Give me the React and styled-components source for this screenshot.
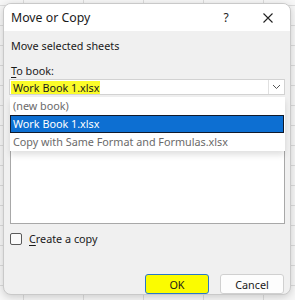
import React from "react";
import styled, { createGlobalStyle } from "styled-components";

const Global = createGlobalStyle`
  html, body { margin: 0; padding: 0; }
  body {
    width: 295px; height: 300px; overflow: hidden;
    background-color: #f7f7f7;
    background-image:
      linear-gradient(to right, #dcdcdc 1px, transparent 1px),
      linear-gradient(to bottom, #dcdcdc 1px, transparent 1px);
    background-size: 60px 100%, 100% 20px;
    background-position: 23px 0, 0 5px;
    font-family: "Noto Sans", "Open Sans", sans-serif;
  }
`;

const Desk = styled.div`
  padding: 3px 0 0 3px;
`;

const Dialog = styled.div`
  width: 288px;
  height: 292px;
  box-sizing: border-box;
  border: 1px solid #c9c9c9;
  border-radius: 8px;
  background: #f0f0f0;
  box-shadow: 0 2px 8px rgba(0,0,0,0.18);
  overflow: hidden;
  display: flex;
  flex-direction: column;
`;

const TitleBar = styled.div`
  height: 27px;
  background: #ffffff;
  display: flex;
  align-items: center;
  padding-left: 7px;
  padding-right: 5px;
  color: #1a1a1a;
  font-size: 12.3px;
`;

const Title = styled.div`
  flex: 1;
`;

const TitleBtn = styled.div`
  width: ${p => p.$w}px;
  display: flex;
  justify-content: center;
  align-items: center;
  font-size: 12px;
  color: #222;
`;

const Body = styled.div`
  flex: 1;
  display: flex;
  flex-direction: column;
  padding: 0 5px 0 5px;
  font-size: 10.8px;
  color: #1a1a1a;
  white-space: nowrap;
`;

const Label = styled.div`
  margin-top: ${p => p.$mt}px;
  padding-left: 2px;
  line-height: 15px;
`;

const U = styled.span`
  text-decoration: underline;
  text-underline-offset: 2px;
`;

const ComboWrap = styled.div`
  position: relative;
  margin-top: 1px;
`;

const Combo = styled.div`
  height: 16px;
  box-sizing: border-box;
  border: 1px solid #d2d2d2;
  background: #ffffff;
  display: flex;
  align-items: center;
  padding: 0 0 0 1px;
`;

const ComboText = styled.span`
  background: #fbfc2a;
  height: 13px;
  width: 87px;
  line-height: 13px;
  padding-left: 2px;
  color: #1a1a1a;
  white-space: nowrap;
`;

const Spacer = styled.div`
  flex: 1;
`;

const DropBtn = styled.div`
  width: 16px;
  height: 14px;
  box-sizing: border-box;
  border-left: 1px solid #e0e0e0;
  display: flex;
  align-items: center;
  justify-content: center;
`;

const Popup = styled.div`
  position: absolute;
  left: 1px;
  right: 0;
  top: 18px;
  background: #ffffff;
  z-index: 2;
  box-shadow: 0 4px 6px rgba(0,0,0,0.12);
`;

const Item = styled.div`
  height: 18px;
  box-sizing: border-box;
  padding-left: ${p => (p.$sel ? 2 : 3)}px;
  color: ${p => (p.$sel ? "#ffffff" : "#6a6a6a")};
  background: ${p => (p.$sel ? "#0d6fd2" : "transparent")};
  border: ${p => (p.$sel ? "1px solid #111a2a" : "none")};
  line-height: ${p => (p.$sel ? 16 : 18)}px;
  margin-right: 1px;
`;

const ListBox = styled.div`
  margin-top: 2px;
  margin-left: 1px;
  height: 127px;
  box-sizing: border-box;
  border: 1px solid #a8a8a8;
  background: #ffffff;
`;

const CheckRow = styled.div`
  margin-top: 7px;
  display: flex;
  align-items: center;
  gap: 7px;
  padding-left: 1px;
`;

const Box = styled.div`
  width: 12px;
  height: 12px;
  box-sizing: border-box;
  border: 1px solid #5a5a5a;
  border-radius: 2px;
  background: #fafafa;
`;

const Buttons = styled.div`
  margin-top: 28px;
  display: flex;
  justify-content: flex-end;
  gap: 11px;
  padding-right: 1px;
`;

const Button = styled.div`
  width: 64px;
  height: 20px;
  box-sizing: border-box;
  border-radius: 3px;
  border: 1px solid ${p => (p.$primary ? "#2a78c8" : "#d0d0d0")};
  background: ${p => (p.$primary ? "#fbfc00" : "#fdfdfd")};
  display: flex;
  align-items: center;
  justify-content: center;
  font-size: 10.8px;
  color: #1a1a1a;
`;

export default function App() {
  return (
    <>
      <Global />
      <Desk>
        <Dialog>
          <TitleBar>
            <Title>Move or Copy</Title>
            <TitleBtn $w={50}>?</TitleBtn>
            <TitleBtn $w={34}>
              <svg width="10" height="10" viewBox="0 0 10 10">
                <path d="M0.5 0.5 L9.5 9.5 M9.5 0.5 L0.5 9.5" stroke="#222" strokeWidth="1.1" fill="none" />
              </svg>
            </TitleBtn>
          </TitleBar>
          <Body>
            <Label $mt={7}>Move selected sheets</Label>
            <Label $mt={10}><U>T</U>o book:</Label>
            <ComboWrap>
              <Combo>
                <ComboText>Work Book 1.xlsx</ComboText>
                <Spacer />
                <DropBtn>
                  <svg width="9" height="6" viewBox="0 0 9 6">
                    <path d="M1 1 L4.5 4.5 L8 1" stroke="#555" strokeWidth="1" fill="none" />
                  </svg>
                </DropBtn>
              </Combo>
              <Popup>
                <Item>(new book)</Item>
                <Item $sel>Work Book 1.xlsx</Item>
                <Item>Copy with Same Format and Formulas.xlsx</Item>
              </Popup>
            </ComboWrap>
            <ListBox />
            <CheckRow>
              <Box />
              <span><U>C</U>reate a copy</span>
            </CheckRow>
            <Buttons>
              <Button $primary>OK</Button>
              <Button>Cancel</Button>
            </Buttons>
          </Body>
        </Dialog>
      </Desk>
    </>
  );
}
